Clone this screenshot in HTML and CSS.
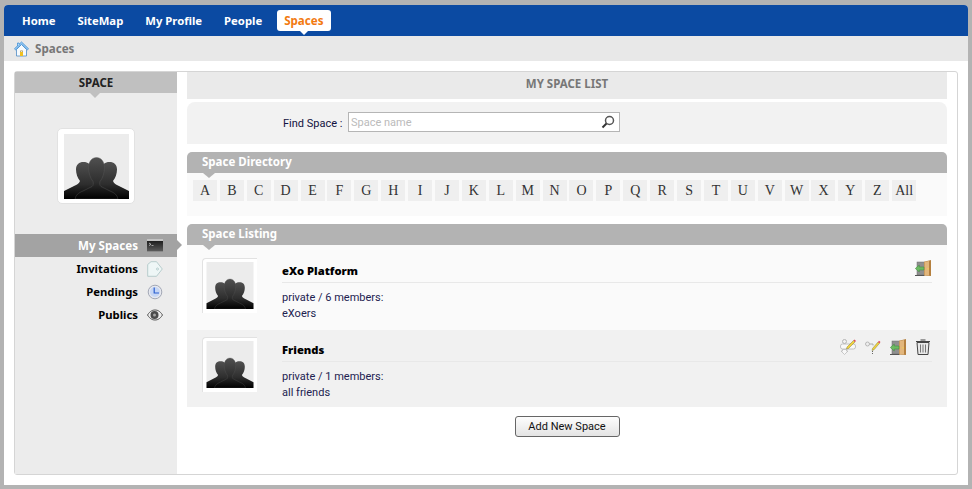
FILE: index.html
```html
<!DOCTYPE html>
<html lang="en">
<head>
    <meta charset="UTF-8">
    <meta name="viewport" content="width=device-width, initial-scale=1.0">
    <title>Spaces</title>
    <link rel="stylesheet" href="styles.css">
</head>
<body>
    <svg class="defs" width="0" height="0">
        <defs>
            <linearGradient id="sil" x1="0" y1="0" x2="0" y2="1">
                <stop offset="0" stop-color="#505050"/>
                <stop offset="0.6" stop-color="#2e2e2e"/>
                <stop offset="1" stop-color="#000"/>
            </linearGradient>
            <linearGradient id="term" x1="0" y1="0" x2="0" y2="1">
                <stop offset="0" stop-color="#1e1e1e"/>
                <stop offset="1" stop-color="#5a5a5a"/>
            </linearGradient>
            <symbol id="avatar" viewBox="0 0 65 65">
                <rect width="65" height="65" fill="#ececec"/>
                <path fill="url(#sil)" d="M0 65V57l10-5c3-1.500 5-2.500 6-5-2.500-3-4-7.500-4-11.500 0-5 3-7.500 7.500-7.500S27 30 27 35l6 3v27z"/>
                <path fill="url(#sil)" d="M65 65V57l-10-5c-3-1.500-5-2.500-6-5 2.500-3 4-7.500 4-11.500 0-5-3-7.500-7.500-7.500S38 30 38 35l-6 3v27z"/>
                <path fill="url(#sil)" stroke="#5a5a5a" stroke-width=".4" d="M11 65c1-4 3-6 8-8l9-4.500c1.500-1 1.500-3 1-5-2.500-3-4.500-8.500-4.500-14 0-6 3.500-10 8-10s8 4 8 10c0 5.500-2 11-4.500 14-.5 2-.5 4 1 5l9 4.500c5 2 7 4 8 8z"/>
            </symbol>
            <symbol id="door" viewBox="0 0 16 16">
                <rect x="2" y="2" width="7.500" height="13" fill="#8f8f8f" stroke="#6e6e6e" stroke-width=".5"/>
                <path d="M0 15h9.500v1H0z" fill="#555"/>
                <path d="M9 1.700L16 0v16l-7-.5z" fill="#b5803f"/>
                <path d="M9.500 2L14 .9v14.500l-4.500-.4z" fill="#e2b67c"/>
                <rect x="12.500" y="8" width="1" height="1.500" fill="#f4d24a"/>
                <path d="M.3 8.500l4-3.500v2H9v3H4.300v2z" fill="#6cba62" stroke="#3d8a3c" stroke-width=".5"/>
            </symbol>
        </defs>
    </svg>

    <div class="page">
        <div class="topbar">
            <a class="nav-item">Home</a>
            <a class="nav-item">SiteMap</a>
            <a class="nav-item">My Profile</a>
            <a class="nav-item">People</a>
            <a class="nav-item active">Spaces</a>
        </div>
        <div class="breadcrumb">
            <svg class="home-icon" width="15" height="16" viewBox="0 0 15 16">
                <path d="M2.500 8.500V15h10V8.500L7.500 3.500z" fill="#f6fafd" stroke="#4f8cc4" stroke-width=".8"/>
                <path d="M7.500 1L.5 7.800l1.200 1L7.500 3.200l5.800 5.600 1.200-1z" fill="#a9d4f5" stroke="#2f86d6" stroke-width=".8"/>
                <path d="M3.500 5V2h1.500v1.500" fill="#d8ecfb" stroke="#2f86d6" stroke-width=".7"/>
                <rect x="6" y="11" width="3" height="4" fill="#f0c020"/>
                <path d="M6.500 11V9.800h2V11" fill="none" stroke="#9a7a20" stroke-width=".6"/>
            </svg>
            <span>Spaces</span>
        </div>

        <div class="content">
            <div class="panel">
                <aside class="sidebar">
                    <div class="side-head">SPACE</div>
                    <div class="side-avatar"><svg width="65" height="65"><use href="#avatar"/></svg></div>
                    <ul class="side-menu">
                        <li class="selected">
                            <span>My Spaces</span>
                            <svg width="16" height="13" viewBox="0 0 16 13"><rect width="16" height="2" fill="#c4c4c4"/><rect y="2" width="16" height="10" fill="url(#term)"/><rect y="12" width="16" height="1" fill="#8a8a8a"/><path d="M2 4l2 1.300L2 6.600" stroke="#ddd" fill="none" stroke-width=".7"/><path d="M4.500 6.500h2" stroke="#ccc" stroke-width=".7"/></svg>
                        </li>
                        <li>
                            <span>Invitations</span>
                            <svg width="16" height="16" viewBox="0 0 16 16"><path d="M.7 3.500L4 .7h5.500L15.300 8l-5.800 7.300H.7z" fill="#eef6f6" stroke="#a9c4c4" stroke-width=".8"/><circle cx="10.500" cy="8" r="1" fill="#fff" stroke="#9bb" stroke-width=".7"/></svg>
                        </li>
                        <li>
                            <span>Pendings</span>
                            <svg width="16" height="16" viewBox="0 0 16 16"><circle cx="8" cy="8" r="6.800" fill="#e6e8ef" stroke="#a3a8b5"/><circle cx="8" cy="8" r="5" fill="#c6d6f4"/><path d="M7.200 3.500V9H12" stroke="#2a5fd0" stroke-width="1.200" fill="none"/></svg>
                        </li>
                        <li>
                            <span>Publics</span>
                            <svg width="16" height="12" viewBox="0 0 16 12"><path d="M.5 6C3 2 5.500 1 8 1s5 1 7.500 5C13 10 10.500 11 8 11S3 10 .5 6z" fill="#ececec" stroke="#555"/><circle cx="7.500" cy="6" r="4" fill="#4a4a4a"/><circle cx="7.500" cy="6" r="1.500" fill="#a5a5a5"/></svg>
                        </li>
                    </ul>
                </aside>

                <main class="main">
                    <div class="list-title">MY SPACE LIST</div>

                    <form class="search-box">
                        <label for="find">Find Space :</label>
                        <div class="search-input">
                            <input type="text" id="find" placeholder="Space name">
                            <svg width="14" height="14" viewBox="0 0 14 14"><circle cx="8.500" cy="5.500" r="4" fill="none" stroke="#555" stroke-width="1.500"/><path d="M5.500 8.500L1.500 12.500" stroke="#333" stroke-width="2"/></svg>
                        </div>
                    </form>

                    <section class="block">
                        <h3 class="block-head">Space Directory</h3>
                        <div class="alpha">
                            <a>A</a><a>B</a><a>C</a><a>D</a><a>E</a><a>F</a><a>G</a><a>H</a><a>I</a>
                            <a>J</a><a>K</a><a>L</a><a>M</a><a>N</a><a>O</a><a>P</a><a>Q</a><a>R</a>
                            <a>S</a><a>T</a><a>U</a><a>V</a><a>W</a><a>X</a><a>Y</a><a>Z</a><a>All</a>
                        </div>
                    </section>

                    <section class="block">
                        <h3 class="block-head">Space Listing</h3>
                        <div class="space-row first">
                            <div class="thumb"><svg width="48" height="47"><use href="#avatar"/></svg></div>
                            <div class="space-info">
                                <div class="space-title">
                                    <strong>eXo Platform</strong>
                                    <div class="actions">
                                        <svg width="16" height="16"><use href="#door"/></svg>
                                    </div>
                                </div>
                                <p>private / 6 members:</p>
                                <p>eXoers</p>
                            </div>
                        </div>
                        <div class="space-row second">
                            <div class="thumb"><svg width="48" height="47"><use href="#avatar"/></svg></div>
                            <div class="space-info">
                                <div class="space-title">
                                    <strong>Friends</strong>
                                    <div class="actions">
                                        <svg width="16" height="16" viewBox="0 0 16 16"><circle cx="4.500" cy="2.500" r="2" fill="none" stroke="#b5b5b5"/><rect x=".5" y="5" width="15" height="5" rx="2" fill="#f8f8f8" stroke="#b5b5b5" stroke-width=".8"/><path d="M2.500 10.500h4V12H8l-3.500 3.500L1 12h1.500z" fill="#f8f8f8" stroke="#b5b5b5" stroke-width=".7"/><path d="M7 8l6.500-6.500 1.500 1.500L8.500 9.500l-2 .5z" fill="#f2d23c" stroke="#6a6a30" stroke-width=".4"/><path d="M13.500 1.500l1-1L16 2l-1 1z" fill="#e4485a"/></svg>
                                        <svg width="16" height="16" viewBox="0 0 16 16"><circle cx="2.500" cy="5" r="2" fill="#eee" stroke="#aaa" stroke-width=".8"/><path d="M4.500 5H8v1.500" stroke="#aaa" fill="none"/><path d="M7.500 9.500l5.500-6.500 1.500 1.300-5.500 6.500-2 .7z" fill="#f2d23c" stroke="#6a6a30" stroke-width=".4"/><path d="M13 3l1-1.200L15.500 3l-1 1.300z" fill="#e4485a"/><path d="M7.500 12v4" stroke="#666" stroke-dasharray="1 1"/></svg>
                                        <svg width="16" height="16"><use href="#door"/></svg>
                                        <svg width="16" height="16" viewBox="0 0 16 16"><path d="M5.500 1h5M1 2.500h14" stroke="#444" stroke-width="1.100"/><path d="M2 3.500l1 12h10l1-12z" fill="#e8e8e8" stroke="#444"/><path d="M5.500 5.500v8M8 5.500v8M10.500 5.500v8" stroke="#777"/></svg>
                                    </div>
                                </div>
                                <p>private / 1 members:</p>
                                <p>all friends</p>
                            </div>
                        </div>
                    </section>

                    <div class="add-row"><button type="button">Add New Space</button></div>
                </main>
            </div>
        </div>
    </div>
</body>
</html>
```

FILE: styles.css
```css
* {
    box-sizing: border-box;
}
html, body {
    margin: 0;
    height: 489px;
    overflow: hidden;
}
body {
    background-color: #b3b3b3;
    padding: 5px 4px 4px;
    font-family: Roboto, Arial, sans-serif;
    font-size: 11px;
    color: #222250;
}
.defs {
    position: absolute;
}
.page {
    height: 480px;
    background-color: #fff;
    border-radius: 4px 4px 0 0;
}
.topbar {
    height: 31px;
    background-color: #0b4aa2;
    border-radius: 4px 4px 0 0;
    padding: 5px 0 0 11px;
    display: flex;
    gap: 8px;
}
.nav-item, .breadcrumb, .side-head, .side-menu li, .list-title, .block-head, .space-title {
    font-family: "Noto Sans", Arial, sans-serif;
    font-weight: bold;
}
.nav-item {
    position: relative;
    height: 21px;
    line-height: 21px;
    padding: 0 7px;
    color: #fff;
    font-size: 11.3px;
}
.nav-item.active {
    width: 54px;
    background-color: #fff;
    color: #f27a10;
    font-size: 11.6px;
    border-radius: 3px;
}
.nav-item.active:after {
    content: "";
    position: absolute;
    left: 23px;
    top: 21px;
    border: 4px solid transparent;
    border-top-color: #fff;
    border-bottom: 0;
}
.breadcrumb {
    height: 25px;
    background-color: #e8e8e8;
    display: flex;
    align-items: center;
    padding-left: 10px;
    color: #777;
    font-size: 11.6px;
}
.home-icon {
    margin-right: 6px;
}
.content {
    padding: 10px;
}
.panel {
    display: flex;
    height: 404px;
    border: 1px solid #d5d5d5;
    border-radius: 3px;
}
.sidebar {
    width: 162px;
    background-color: #ececec;
}
.side-head {
    position: relative;
    height: 21px;
    line-height: 21px;
    background-color: #c0c0c0;
    text-align: center;
    font-size: 11.5px;
    color: #222;
}
.side-head:after {
    content: "";
    position: absolute;
    left: 75px;
    top: 21px;
    border: 5px solid transparent;
    border-top-color: #c0c0c0;
    border-bottom: 0;
}
.side-avatar {
    width: 78px;
    height: 76px;
    margin: 35px 0 30px 42px;
    padding: 6px 0 0 7px;
    background-color: #fff;
    border: 1px solid #e2e2e2;
    border-radius: 5px;
}
.side-avatar svg {
    display: block;
    margin: -1px 0 0 -1px;
}
.side-menu {
    list-style: none;
    margin: 0;
    padding: 0;
}
.side-menu li {
    position: relative;
    height: 23px;
    display: flex;
    align-items: center;
    justify-content: flex-end;
    padding-right: 14px;
    color: #000;
    font-size: 11.3px;
}
.side-menu li span {
    margin-right: 9px;
}
.side-menu li.selected {
    background-color: #a3a3a3;
    color: #fff;
    font-size: 11.6px;
}
.side-menu li.selected:after {
    content: "";
    position: absolute;
    left: 162px;
    top: 6px;
    border: 5px solid transparent;
    border-left-color: #a3a3a3;
    border-right: 0;
}
.main {
    width: 760px;
    margin-left: 10px;
}
.list-title {
    height: 27px;
    line-height: 24px;
    background-color: #eaeaea;
    text-align: center;
    font-size: 11.5px;
    color: #777;
}
.search-box {
    height: 42px;
    margin-top: 3px;
    background-color: #f2f2f2;
    border-radius: 8px 8px 0 0;
    display: flex;
    align-items: center;
    padding: 0 0 2px 96px;
}
.search-box label {
    width: 65px;
    padding-top: 2px;
    color: #111140;
}
.search-input {
    display: flex;
    align-items: center;
    width: 272px;
    height: 20px;
    background-color: #fff;
    border: 1px solid #b5b5b5;
    padding-right: 4px;
}
.search-input input {
    flex: 1;
    border: none;
    outline: none;
    padding: 0 2px;
    font: inherit;
}
.search-input input::placeholder {
    color: #bbb;
}
.block {
    margin-top: 8px;
}
.block-head {
    position: relative;
    height: 21px;
    line-height: 20px;
    margin: 0;
    padding-left: 15px;
    background-color: #b3b3b3;
    border-radius: 5px 5px 0 0;
    color: #fff;
    font-size: 11.5px;
}
.block-head:after {
    content: "";
    position: absolute;
    left: 16px;
    top: 21px;
    border: 6px solid transparent;
    border-top-color: #b3b3b3;
    border-top-width: 5px;
    border-bottom: 0;
}
.alpha {
    height: 43px;
    background-color: #fafafa;
    padding: 7px 0 0 6px;
    display: flex;
    gap: 2.9px;
    align-items: flex-start;
}
.alpha a {
    width: 24px;
    height: 21px;
    line-height: 21px;
    background-color: #efefef;
    text-align: center;
    font-family: "Liberation Serif", "Times New Roman", serif;
    font-size: 14px;
    color: #333;
}
.space-row {
    display: flex;
    background-color: #fafafa;
}
.space-row.first {
    height: 85px;
    padding-top: 13px;
}
.space-row.second {
    height: 77px;
    padding-top: 7px;
    background-color: #f1f1f1;
}
.thumb {
    width: 55px;
    height: 55px;
    margin-left: 15px;
    padding: 3px 0 0 3px;
    background-color: #fff;
    border-top: 1px solid #e2e2e2;
    border-left: 1px solid #e2e2e2;
    border-radius: 4px 0 0 0;
}
.thumb svg {
    display: block;
}
.space-info {
    width: 650px;
    margin-left: 25px;
}
.space-title {
    display: flex;
    justify-content: space-between;
    height: 25px;
    border-bottom: 1px solid #e8e8e8;
    color: #000;
    font-size: 11.2px;
    line-height: 25px;
}
.actions {
    display: flex;
    align-items: flex-start;
    gap: 9px;
    margin-right: 1px;
    padding-top: 2px;
}
.first .space-title {
    line-height: 26px;
}
.space-info p {
    margin: 0;
    height: 16px;
    line-height: 16px;
}
.space-title + p {
    margin-top: 7px;
}
.add-row {
    display: flex;
    justify-content: center;
    padding-top: 9px;
}
.add-row button {
    width: 105px;
    height: 21px;
    padding: 0;
    background: linear-gradient(#fdfdfd, #e4e4e4);
    border: 1px solid #666;
    border-radius: 3px;
    font: inherit;
    color: #111;
}
```
